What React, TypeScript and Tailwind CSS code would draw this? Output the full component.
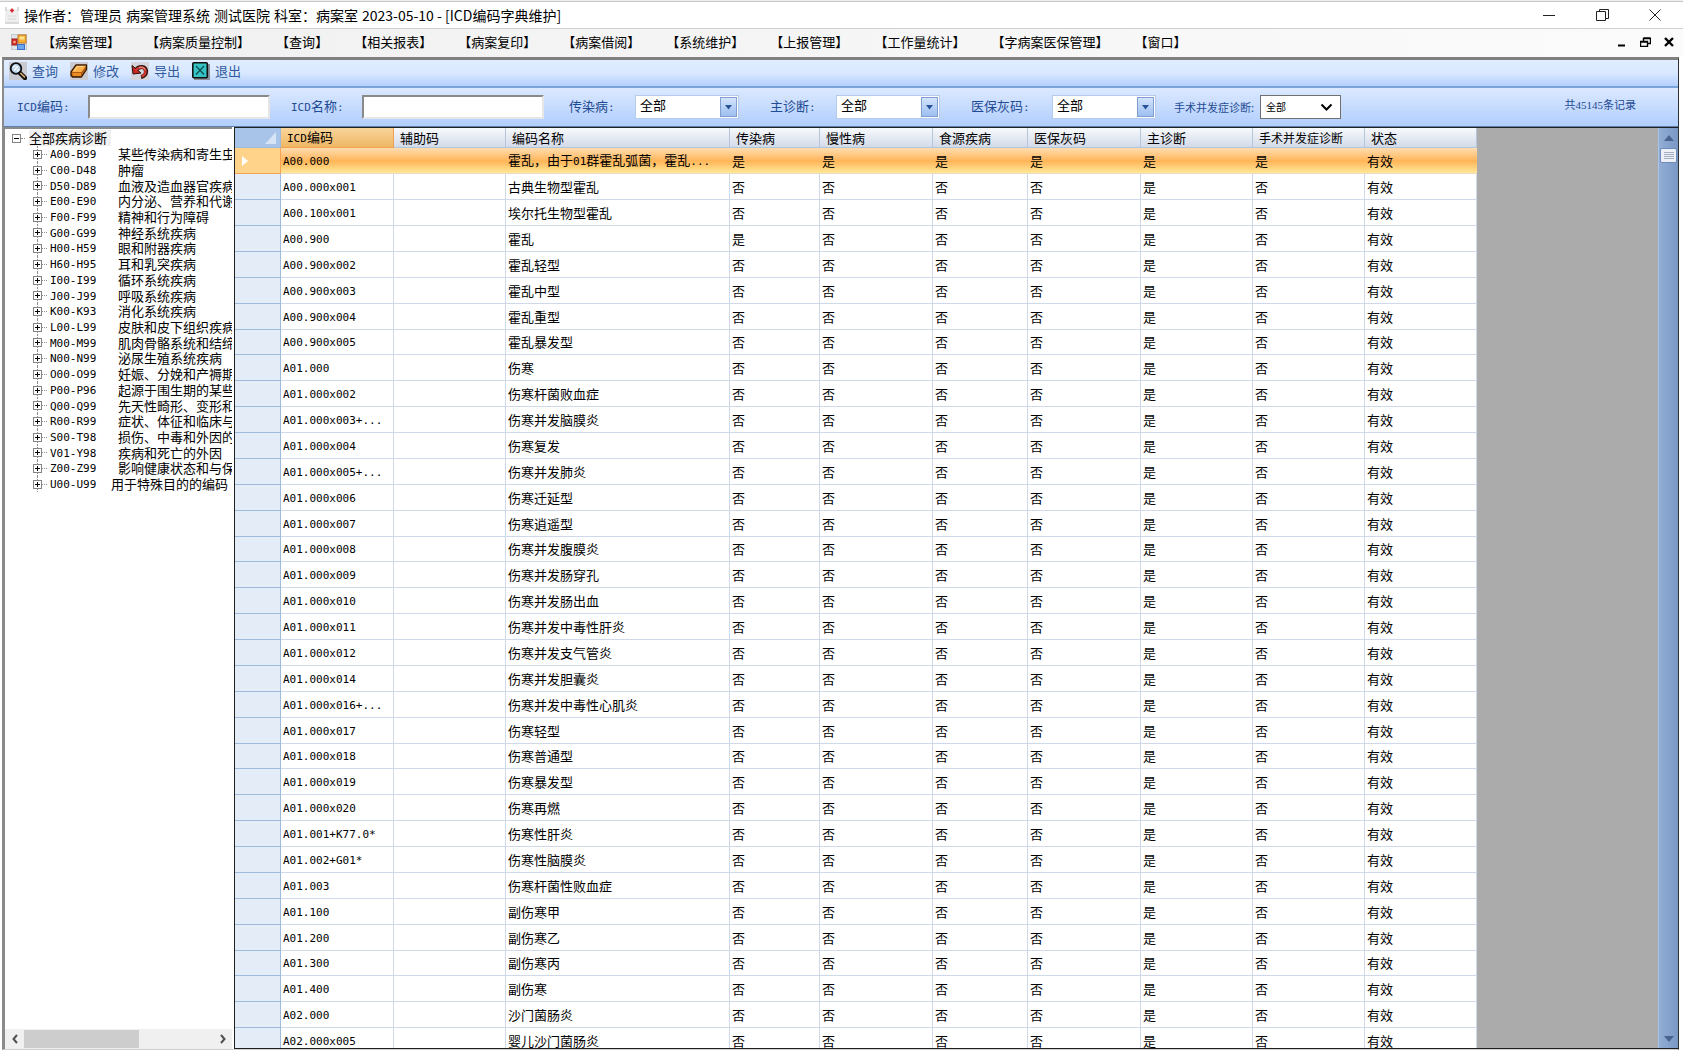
import React from "react";

const MENUS = [
  "病案管理", "病案质量控制", "查询", "相关报表", "病案复印", "病案借阅",
  "系统维护", "上报管理", "工作量统计", "字病案医保管理", "窗口",
];

const TITLE = ["操作者：管理员", "病案管理系统", "测试医院", "科室：病案室", "2023-05-10 - [ICD编码字典维护]"];

const TREE: [string, string][] = [
  ["A00-B99", "某些传染病和寄生虫病"],
  ["C00-D48", "肿瘤"],
  ["D50-D89", "血液及造血器官疾病"],
  ["E00-E90", "内分泌、营养和代谢疾病"],
  ["F00-F99", "精神和行为障碍"],
  ["G00-G99", "神经系统疾病"],
  ["H00-H59", "眼和附器疾病"],
  ["H60-H95", "耳和乳突疾病"],
  ["I00-I99", "循环系统疾病"],
  ["J00-J99", "呼吸系统疾病"],
  ["K00-K93", "消化系统疾病"],
  ["L00-L99", "皮肤和皮下组织疾病"],
  ["M00-M99", "肌肉骨骼系统和结缔组织疾病"],
  ["N00-N99", "泌尿生殖系统疾病"],
  ["O00-O99", "妊娠、分娩和产褥期"],
  ["P00-P96", "起源于围生期的某些情况"],
  ["Q00-Q99", "先天性畸形、变形和染色体异常"],
  ["R00-R99", "症状、体征和临床与实验室异常"],
  ["S00-T98", "损伤、中毒和外因的某些后果"],
  ["V01-Y98", "疾病和死亡的外因"],
  ["Z00-Z99", "影响健康状态和与保健机构接触的因素"],
  ["U00-U99", "用于特殊目的的编码"],
];

const ROWS: [string, string][] = [
  ["A00.000", "霍乱，由于01群霍乱弧菌，霍乱..."],
  ["A00.000x001", "古典生物型霍乱"],
  ["A00.100x001", "埃尔托生物型霍乱"],
  ["A00.900", "霍乱"],
  ["A00.900x002", "霍乱轻型"],
  ["A00.900x003", "霍乱中型"],
  ["A00.900x004", "霍乱重型"],
  ["A00.900x005", "霍乱暴发型"],
  ["A01.000", "伤寒"],
  ["A01.000x002", "伤寒杆菌败血症"],
  ["A01.000x003+...", "伤寒并发脑膜炎"],
  ["A01.000x004", "伤寒复发"],
  ["A01.000x005+...", "伤寒并发肺炎"],
  ["A01.000x006", "伤寒迁延型"],
  ["A01.000x007", "伤寒逍遥型"],
  ["A01.000x008", "伤寒并发腹膜炎"],
  ["A01.000x009", "伤寒并发肠穿孔"],
  ["A01.000x010", "伤寒并发肠出血"],
  ["A01.000x011", "伤寒并发中毒性肝炎"],
  ["A01.000x012", "伤寒并发支气管炎"],
  ["A01.000x014", "伤寒并发胆囊炎"],
  ["A01.000x016+...", "伤寒并发中毒性心肌炎"],
  ["A01.000x017", "伤寒轻型"],
  ["A01.000x018", "伤寒普通型"],
  ["A01.000x019", "伤寒暴发型"],
  ["A01.000x020", "伤寒再燃"],
  ["A01.001+K77.0*", "伤寒性肝炎"],
  ["A01.002+G01*", "伤寒性脑膜炎"],
  ["A01.003", "伤寒杆菌性败血症"],
  ["A01.100", "副伤寒甲"],
  ["A01.200", "副伤寒乙"],
  ["A01.300", "副伤寒丙"],
  ["A01.400", "副伤寒"],
  ["A02.000", "沙门菌肠炎"],
  ["A02.000x005", "婴儿沙门菌肠炎"],
];

const HEADERS = ["ICD编码", "辅助码", "编码名称", "传染病", "慢性病", "食源疾病", "医保灰码", "主诊断", "手术并发症诊断", "状态"];

/* Latin runs are set in a smaller monospace so that each takes half a CJK cell. */
function Mixed({ text }: { text: string }) {
  return (
    <>
      {text.split(/([\x20-\x7e]+)/).map((part, i) =>
        i % 2 ? (
          <span key={i} className="font-['DejaVu_Sans_Mono',monospace] text-[11px]">{part}</span>
        ) : (
          part
        )
      )}
    </>
  );
}

function AppIcon() {
  return (
    <svg width="16" height="18" viewBox="0 0 16 18">
      <rect x="1" y="3" width="14" height="14" fill="#eeeeee" />
      <path d="M2 1v4M14 1v4M1 17h14" stroke="#cfcfcf" strokeWidth="1.5" />
      <path d="M4 10h8M4 13h8" stroke="#d9d9d9" />
      <path d="M8 2.500v4M6 4.500h4" stroke="#d8202a" strokeWidth="1.600" />
    </svg>
  );
}

function FormIcon() {
  return (
    <svg width="16" height="16" viewBox="0 0 16 16">
      <rect x="0.500" y="0.500" width="15" height="15" fill="#dfe3ea" stroke="#c5c9d2" />
      <rect x="7" y="1" width="8" height="8" fill="#f9b233" stroke="#c9761a" />
      <rect x="8.500" y="2.500" width="5" height="3" fill="#fde08f" />
      <rect x="1" y="5" width="5" height="6" fill="#d8372c" stroke="#9d1d18" />
      <rect x="2.500" y="7" width="2" height="2" fill="#f7b1a0" />
      <rect x="6.500" y="10.500" width="7" height="5" fill="#6ea6ee" stroke="#3d71c4" />
    </svg>
  );
}

function SearchIcon() {
  return (
    <svg width="18" height="18" viewBox="0 0 18 18">
      <rect width="18" height="18" fill="#c9cbd0" />
      <path d="M10.500 10.500l5.500 5.500" stroke="#111" strokeWidth="4.500" strokeLinecap="round" />
      <path d="M11.500 11l4 4" stroke="#e8b870" strokeWidth="1.500" strokeLinecap="round" />
      <circle cx="7" cy="6.500" r="5.300" fill="#bcd7ef" stroke="#111" strokeWidth="1.800" />
      <path d="M4 5.500l2.500-2M5 8.500l4-4.500M8 9.500l2-2.500" stroke="#fff" strokeWidth="1.300" />
    </svg>
  );
}

function EditIcon() {
  return (
    <svg width="18" height="18" viewBox="0 0 18 18">
      <rect width="18" height="18" fill="#c9cbd0" />
      <path d="M1 10L6 3h10.500v4.500L11.500 15H2.500L1 13.500z" fill="#b05c10" stroke="#3a1c05" strokeWidth="1.300" strokeLinejoin="round" />
      <path d="M2 10L6.500 3.700H16L11.500 10z" fill="#fbb04a" />
      <path d="M4 9l3.500-4.500h6" stroke="#ffd590" strokeWidth="1.200" fill="none" />
      <path d="M2 11h9v3H3z" fill="#e98a22" />
    </svg>
  );
}

function ExportIcon() {
  return (
    <svg width="18" height="18" viewBox="0 0 18 18">
      <rect width="18" height="18" fill="#d3d5da" />
      <path d="M4.500 8.500C8 3.500 14.500 4 15 9c.2 3-2 5.500-5 6" fill="none" stroke="#2b1010" strokeWidth="4.200" />
      <path d="M1 3.500l1 8.500 8-1z" fill="#c9261f" stroke="#2b1010" />
      <path d="M4.500 8.500C8 4 14 4.500 14.500 9c.2 2.800-1.500 4.500-4 5.500" fill="none" stroke="#cf3a30" strokeWidth="2.400" />
      <path d="M8 5.500c2.500-1 5-.3 6 2" fill="none" stroke="#f2a59b" />
    </svg>
  );
}

function ExitIcon() {
  return (
    <svg width="18" height="18" viewBox="0 0 18 18">
      <rect x="2" y="2" width="16" height="16" fill="#8a8f98" />
      <rect x="0.800" y="0.800" width="14.500" height="15" rx="1" fill="#35c3c4" stroke="#111" strokeWidth="1.600" />
      <path d="M4 4l8 8.500M12 4l-8 8.500" stroke="#0c4f55" strokeWidth="1.300" />
    </svg>
  );
}

const TOOLS: [string, () => React.ReactElement][] = [
  ["查询", SearchIcon],
  ["修改", EditIcon],
  ["导出", ExportIcon],
  ["退出", ExitIcon],
];

function TextField({ id, label }: { id: string; label: string }) {
  return (
    <div className="flex items-center">
      <label htmlFor={id} className="w-[71px] shrink-0"><Mixed text={label} /></label>
      <input id={id} className="h-6 w-[182px] border-2 border-t-[#8a8a8a] border-r-[#e6e6e6] border-b-[#e6e6e6] border-l-[#8a8a8a] bg-white px-1 text-black outline-none" />
    </div>
  );
}

function Combo({ id, label, wide }: { id: string; label: string; wide?: boolean }) {
  return (
    <div className="flex items-center">
      <label htmlFor={id} className={wide ? "w-[81px] shrink-0" : "w-[66px] shrink-0"}><Mixed text={label} /></label>
      <div className="relative">
        <select id={id} className="block h-6 w-[104px] appearance-none border border-[#b5cbee] bg-white pb-1 pl-1 text-[13px] leading-4 text-black outline-none">
          <option>全部</option>
        </select>
        <span className="pointer-events-none absolute top-0.5 right-0.5 flex h-5 w-[17px] items-center justify-center border border-[#7e9fd0] bg-linear-to-b from-[#d3e3fb] to-[#9dbff0]">
          <svg width="7" height="5" viewBox="0 0 7 5"><path d="M0 0h7L3.500 4.500z" fill="#2a5298" /></svg>
        </span>
      </div>
    </div>
  );
}

function TreePane() {
  return (
    <aside className="flex w-[228px] shrink-0 flex-col border-t-2 border-l border-[#8a8a8a] bg-white">
      <div className="min-h-0 flex-1 overflow-hidden pt-px text-[13px] leading-4 whitespace-nowrap text-black">
        <div className="flex h-4 items-center pl-[7px]">
          <button aria-label="折叠" className="flex size-[9px] items-center justify-center border border-[#848484] bg-white">
            <span className="h-px w-[5px] bg-black" />
          </button>
          <span className="w-[4px] border-t border-dotted border-[#909090]" />
          <span className="ml-1 bg-[#f0f0f0] pr-1">全部疾病诊断</span>
        </div>
        <ul className="ml-[28px]">
          {TREE.map(([code, name], i) => (
            <li key={code} className="flex h-4 items-center nth-[7n+3]:h-[15px] nth-[7n+6]:h-[15px]">
              <span className="flex h-full w-[9px] shrink-0 flex-col items-center">
                <span className="w-0 flex-1 border-l border-dotted border-[#909090]" />
                <button aria-label={"展开 " + code} className="relative size-[9px] shrink-0 border border-[#848484] bg-white">
                  <span className="absolute top-[3px] left-px h-px w-[5px] bg-black" />
                  <span className="absolute top-px left-[3px] h-[5px] w-px bg-black" />
                </button>
                <span className="w-0 flex-1 border-l border-dotted border-[#909090]" />
              </span>
              <span className="w-[5px] shrink-0 border-t border-dotted border-[#909090]" />
              <span className={i === TREE.length - 1 ? "ml-[3px] w-[61px] shrink-0" : "ml-[3px] w-[68px] shrink-0"}>
                <Mixed text={code} />
              </span>
              <span>{name}</span>
            </li>
          ))}
        </ul>
      </div>
      <div className="flex h-5 shrink-0 items-center bg-[#f0f0f0]">
        <button aria-label="向左滚动" className="flex w-[19px] justify-center">
          <svg width="6" height="10" viewBox="0 0 6 10"><path d="M5 1L1.500 5 5 9" fill="none" stroke="#505050" strokeWidth="2" /></svg>
        </button>
        <span className="h-[18px] w-[115px] bg-[#cdcdcd]" />
        <button aria-label="向右滚动" className="ml-auto flex w-[19px] justify-center">
          <svg width="6" height="10" viewBox="0 0 6 10"><path d="M1 1l3.500 4L1 9" fill="none" stroke="#505050" strokeWidth="2" /></svg>
        </button>
      </div>
    </aside>
  );
}

function Grid() {
  return (
    <div className="min-w-0 flex-1 overflow-hidden">
      <table className="w-[1242px] table-fixed border-separate border-spacing-0 text-left text-[13px] leading-4 whitespace-nowrap text-black">
        <colgroup>
          <col className="w-[46px]" />
          <col className="w-[113px]" />
          <col className="w-[112px]" />
          <col className="w-[224px]" />
          <col className="w-[90px]" />
          <col className="w-[113px]" />
          <col className="w-[95px]" />
          <col className="w-[113px]" />
          <col className="w-[112px]" />
          <col className="w-[112px]" />
          <col className="w-[112px]" />
        </colgroup>
        <thead>
          <tr>
            <th className="h-5 border-r border-b border-[#9ebbdb] bg-[#a9c4e9] p-0">
              <svg className="ml-auto mr-1" width="11" height="12" viewBox="0 0 11 12"><path d="M11 0v12H0z" fill="#d6e4f6" /></svg>
            </th>
            {HEADERS.map((h, i) => (
              <th
                key={h}
                className={
                  i === 0
                    ? "h-5 border-r border-b border-[#f0a050] bg-linear-to-b from-[#f9d49a] to-[#eeb863] p-0 pl-1.5 font-normal"
                    : "h-5 border-r border-b border-[#b4c6de] bg-linear-to-b from-[#f8fafc] to-[#d3dbe9] p-0 pl-1.5 font-normal"
                }
              >
                {i === 8 ? <span className="text-xs leading-4">{h}</span> : <Mixed text={h} />}
              </th>
            ))}
          </tr>
        </thead>
        <tbody>
          {ROWS.map(([code, name], r) => {
            const cells = [
              code, "", name,
              r === 0 || r === 3 ? "是" : "否",
              r === 0 ? "是" : "否",
              r === 0 ? "是" : "否",
              r === 0 ? "是" : "否",
              "是",
              r === 0 ? "是" : "否",
              "有效",
            ];
            return (
              <tr
                key={code}
                className={
                  r === 0
                    ? "h-[26px] bg-linear-to-b from-[#ffdcae] via-[#ffb557] to-[#ffec9c]"
                    : "h-[26px] bg-white nth-[8n]:h-[25px]"
                }
              >
                <td className={r === 0 ? "border-r border-b border-[#f5a455] bg-[#ffd48a] p-0" : "border-r border-b border-[#9ebbdb] bg-[#e4ecf7] p-0"}>
                  {r === 0 && (
                    <svg className="ml-[7px]" width="6" height="10" viewBox="0 0 6 10"><path d="M0 0l6 5-6 5z" fill="#fff" /></svg>
                  )}
                </td>
                {cells.map((c, i) => (
                  <td key={i} className={r === 0 ? "border-b border-[#e6dcc8] p-0 pl-0.5" : "border-r border-b border-[#d0d9e9] p-0 pl-0.5"}>
                    <Mixed text={c} />
                  </td>
                ))}
              </tr>
            );
          })}
        </tbody>
      </table>
    </div>
  );
}

export default function App() {
  return (
    <div className="flex h-screen flex-col overflow-hidden bg-white font-['Noto_Sans_CJK_SC',sans-serif] text-[13px] text-black">
      <div className="flex h-0.5 shrink-0 border-b border-[#c9c9c9] bg-[#ededed]" />
      <header className="flex h-[27px] shrink-0 items-center border-b border-[#d0d0d0] pl-1">
        <AppIcon />
        <h1 className="ml-1 flex gap-1 text-sm leading-5 whitespace-nowrap">
          {TITLE.map((t) => <span key={t}>{t}</span>)}
        </h1>
        <div className="ml-auto flex items-center gap-10 pr-[22px]">
          <button aria-label="最小化"><svg width="13" height="12" viewBox="0 0 13 12"><path d="M0 6.500h12" stroke="#222" /></svg></button>
          <button aria-label="还原"><svg width="13" height="12" viewBox="0 0 13 12"><path d="M.5 2.500h9v9h-9zM3.500 2.500v-2h9v9h-3" fill="none" stroke="#222" /></svg></button>
          <button aria-label="关闭"><svg width="12" height="12" viewBox="0 0 12 12"><path d="M.5.5l11 11M11.500.5l-11 11" stroke="#222" /></svg></button>
        </div>
      </header>
      <nav className="flex h-7 shrink-0 items-center bg-linear-to-r from-[#f0f0f0] to-[#fbfbfb] pb-0.5 pl-[11px]">
        <FormIcon />
        <div className="ml-[15px] flex gap-[26px] whitespace-nowrap">
          {MENUS.map((m) => <button key={m}>【{m}】</button>)}
        </div>
        <div className="ml-auto flex items-center gap-[13px] pr-[9px]">
          <button aria-label="最小化子窗口"><svg width="10" height="10" viewBox="0 0 10 10"><path d="M1 8.500h7" stroke="#000" strokeWidth="2" /></svg></button>
          <button aria-label="还原子窗口"><svg width="11" height="10" viewBox="0 0 11 10"><path d="M.5 4.500h7v5h-7zM3.500 4V1.500h7v5H8M.5 5h7M3.500 1h7" fill="none" stroke="#000" strokeWidth="1.400" /></svg></button>
          <button aria-label="关闭子窗口"><svg width="10" height="10" viewBox="0 0 10 10"><path d="M1 1l8 8M9 1L1 9" stroke="#000" strokeWidth="2.400" /></svg></button>
        </div>
      </nav>
      <main className="mr-1 mb-[6px] ml-0.5 flex min-h-0 flex-1 flex-col border-t-[3px] border-r border-b border-l-2 border-t-[#808080] border-r-[#303030] border-b-[#d0d0d0] border-l-[#8a8a8a]">
        <div className="flex h-7 shrink-0 items-center gap-3 border-b-2 border-[#7aa3dc] bg-linear-to-b from-[#e1edff] via-[#d9e8ff] to-[#b3d0fc] pb-1 pl-[5px] text-[#2f5a9e]">
          {TOOLS.map(([name, Icon]) => (
            <button key={name} className="flex items-center gap-[5px] leading-5"><Icon />{name}</button>
          ))}
        </div>
        <div className="flex h-[38px] shrink-0 items-center gap-[31px] bg-linear-to-b from-[#dce9ff] to-[#b1cefd] pl-[13px] leading-5 whitespace-nowrap text-[#1f4b93]">
          <div className="flex gap-[21px]">
            <TextField id="icd-code" label="ICD编码:" />
            <TextField id="icd-name" label="ICD名称:" />
          </div>
          <div className="-ml-1.5 flex gap-[31px]">
            <Combo id="infectious" label="传染病:" />
            <Combo id="primary" label="主诊断:" />
            <Combo id="grey" label="医保灰码:" wide />
          </div>
          <div className="-ml-[13px] flex items-center text-[11px]">
            <label htmlFor="surgery" className="w-[86px]">手术并发症诊断:</label>
            <div className="relative">
              <select id="surgery" className="block h-6 w-[81px] appearance-none border border-[#707070] bg-white pl-[5px] text-[10px] leading-4 text-black outline-none">
                <option>全部</option>
              </select>
              <svg className="pointer-events-none absolute top-2 right-2" width="13" height="9" viewBox="0 0 13 9"><path d="M1.500 1.500l5 5 5-5" fill="none" stroke="#000" strokeWidth="2" /></svg>
            </div>
          </div>
          <p className="mr-[42px] ml-auto pb-1 font-['Liberation_Serif','Noto_Sans_CJK_SC',serif] text-[11px]">共45145条记录</p>
        </div>
        <div className="flex min-h-0 flex-1 border-t border-[#5f7fae]">
          <TreePane />
          <section className="ml-0.5 flex min-w-0 flex-1 border border-r-0 border-[#202020] bg-[#ababab]">
            <Grid />
            <div className="flex w-5 shrink-0 flex-col items-center border-l border-[#a9c3e6] bg-linear-to-r from-[#93aed6] to-[#7998c4]">
              <button aria-label="向上滚动" className="flex h-5 items-center"><svg width="10" height="6" viewBox="0 0 10 6"><path d="M5 0l5 6H0z" fill="#4a6491" /></svg></button>
              <div className="flex h-[15px] w-[17px] flex-col items-center justify-center gap-px rounded-xs border border-[#6f8cb8] bg-[#edf1f7]">
                <span className="h-px w-2.5 bg-[#a5afbf]" />
                <span className="h-px w-2.5 bg-[#a5afbf]" />
                <span className="h-px w-2.5 bg-[#a5afbf]" />
                <span className="h-px w-2.5 bg-[#a5afbf]" />
              </div>
              <button aria-label="向下滚动" className="mt-auto flex h-[18px] items-center"><svg width="10" height="6" viewBox="0 0 10 6"><path d="M0 0h10L5 6z" fill="#4a6491" /></svg></button>
            </div>
          </section>
        </div>
      </main>
    </div>
  );
}
